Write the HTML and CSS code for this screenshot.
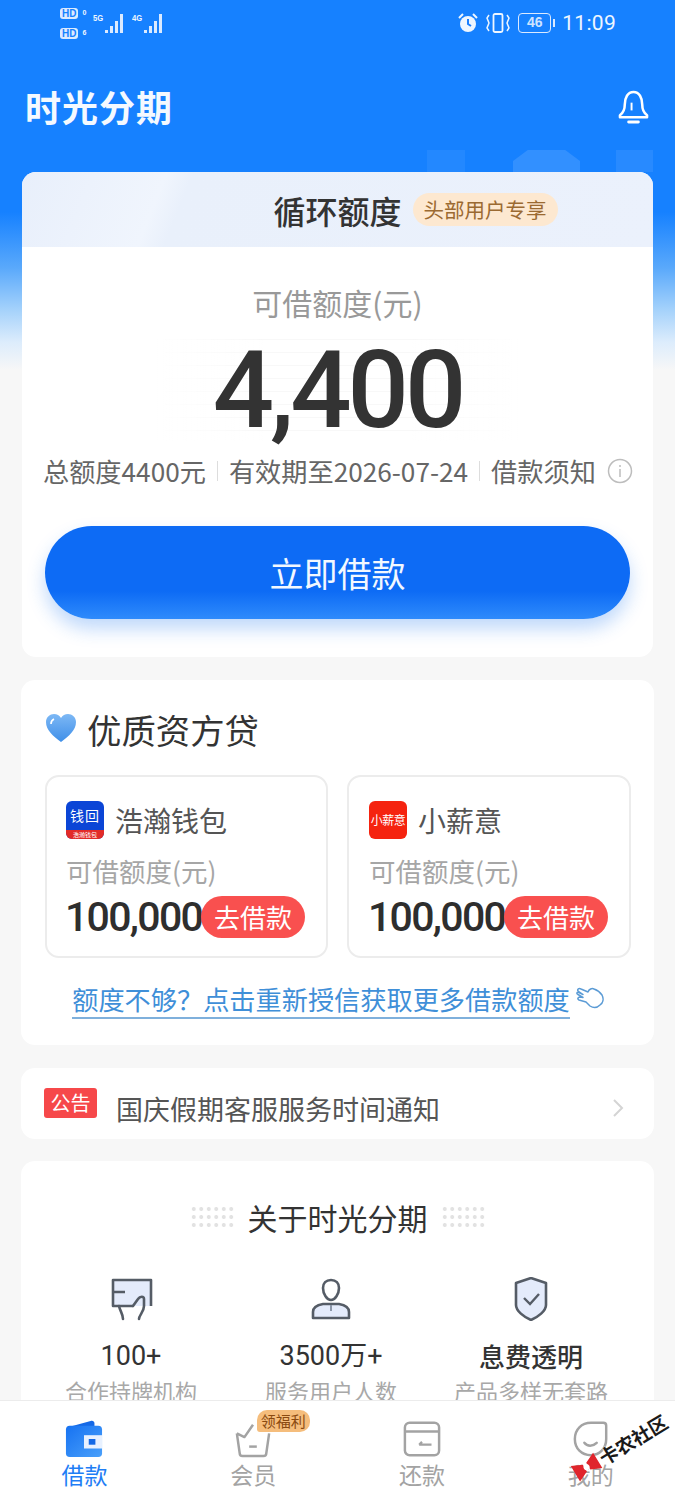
FILE: index.html
```html
<!DOCTYPE html>
<html lang="zh-CN">
<head>
<meta charset="utf-8">
<title>时光分期</title>
<link rel="stylesheet" href="styles.css">
</head>
<body>
<div class="page">
  <div class="scroll">
    <div class="status">
      <div class="status-left">
        <div class="hd-col">
          <div class="hd-row"><span class="hd">HD</span><span class="hd-n">0</span></div>
          <div class="hd-row"><span class="hd">HD</span><span class="hd-n">6</span></div>
        </div>
        <div class="signal"><span class="net">5G</span>
          <svg class="bars" viewBox="0 0 20 20"><path d="M0 20v-3h3v3zM5 20v-7h3v7zM10 20v-12h3v12zM15 20V1h3v19z" fill="#dbeaff"/></svg>
        </div>
        <div class="signal"><span class="net">4G</span>
          <svg class="bars" viewBox="0 0 20 20"><path d="M0 20v-3h3v3zM5 20v-7h3v7zM10 20v-12h3v12zM15 20V1h3v19z" fill="#dbeaff"/></svg>
        </div>
      </div>
      <div class="status-right">
        <svg class="st-alarm" viewBox="0 0 20 20"><circle cx="10" cy="11" r="8" fill="#eef6ff"/><path d="M10 6v5l3 2" stroke="#1a7fff" stroke-width="2" fill="none"/><path d="M1 5l4-4M19 5l-4-4" stroke="#eef6ff" stroke-width="2"/></svg>
        <svg class="st-vib" viewBox="0 0 26 20"><rect x="8.500" y="1" width="9" height="18" rx="1.500" fill="none" stroke="#eef6ff" stroke-width="1.800"/><path d="M4 2l-2 3 2 5-2 5 2 3M22 2l2 3-2 5 2 5-2 3" fill="none" stroke="#eef6ff" stroke-width="1.500"/></svg>
        <span class="batt">46</span><span class="batt-tip"></span>
        <span class="clock">11:09</span>
      </div>
    </div>

    <header class="topbar">
      <h1 class="brand">时光分期</h1>
      <svg class="bell" viewBox="0 0 32 38"><path d="M16 3c-6 0-9 6-9 13 0 6-2 9-5 11v2h28v-2c-3-2-5-5-5-11 0-7-3-13-9-13z" fill="none" stroke="#fff" stroke-width="2.600" stroke-linejoin="round"/><path d="M14 14v8" stroke="#fff" stroke-width="2"/><path d="M11 34h10" stroke="#fff" stroke-width="3" stroke-linecap="round"/></svg>
    </header>

    <div class="deco">
      <span class="deco-a"></span><span class="deco-b"></span><span class="deco-c"></span>
    </div>

    <section class="card quota">
      <div class="quota-head">
        <span class="quota-title">循环额度</span>
        <span class="quota-tag">头部用户专享</span>
      </div>
      <div class="quota-label">可借额度(元)</div>
      <div class="quota-amount">4,400</div>
      <div class="quota-meta">
        <span>总额度4400元</span><i class="sep"></i>
        <span>有效期至2026-07-24</span><i class="sep"></i>
        <span>借款须知</span>
        <svg class="info" viewBox="0 0 26 26"><circle cx="13" cy="13" r="11.500" fill="none" stroke="#bdbdbd" stroke-width="1.500"/><path d="M13 11v8M13 7v2" stroke="#bdbdbd" stroke-width="1.500"/></svg>
      </div>
      <button class="cta">立即借款</button>
    </section>

    <section class="card lenders">
      <h2 class="lenders-title">
        <svg class="heart" viewBox="0 0 32 30"><defs><linearGradient id="hg" x1="0" y1="0" x2="0" y2="1"><stop offset="0" stop-color="#7db8f5"/><stop offset="1" stop-color="#3f8fe8"/></linearGradient></defs><path d="M16 29C8 23 1 17 1 9c0-5 4-8 8-8 3 0 5.500 1.500 7 4 1.500-2.500 4-4 7-4 4 0 8 3 8 8 0 8-7 14-15 20z" fill="url(#hg)"/><path d="M6 11c0-3 1-4 3-5" stroke="#fff" stroke-width="1.600" fill="none"/></svg>
        优质资方贷
      </h2>
      <div class="lender-grid">
        <div class="lender">
          <div class="lender-name">
            <span class="logo logo-blue"><span class="logo-main">钱回</span><span class="logo-foot">浩瀚钱包</span></span>
            浩瀚钱包
          </div>
          <div class="lender-label">可借额度(元)</div>
          <div class="lender-row"><span class="lender-num">100,000</span><span class="go">去借款</span></div>
        </div>
        <div class="lender">
          <div class="lender-name">
            <span class="logo logo-red">小薪意</span>
            小薪意
          </div>
          <div class="lender-label">可借额度(元)</div>
          <div class="lender-row"><span class="lender-num">100,000</span><span class="go">去借款</span></div>
        </div>
      </div>
      <div class="more">
        <span class="more-link">额度不够？点击重新授信获取更多借款额度</span>
        <svg class="hand" viewBox="0 0 28 24"><path d="M2 5c-1-2 1-3 3-2l7 3c1-3 4-4 6-3 3 1 6 3 8 6 2 4 1 8-2 10-3 3-7 3-10 1l-4-4-7-2c-2-1-1-3 1-3l3 .500-5-3c-2-1-1-3 1-2l4 2z" fill="none" stroke="#5b9bd5" stroke-width="1.500" stroke-linejoin="round"/></svg>
      </div>
    </section>

    <section class="card notice">
      <span class="notice-tag">公告</span>
      <span class="notice-text">国庆假期客服服务时间通知</span>
      <svg class="chev" viewBox="0 0 12 20"><path d="M2 2l8 8-8 8" fill="none" stroke="#d4d4d4" stroke-width="2"/></svg>
    </section>

    <section class="card about">
      <div class="about-head">
        <span class="dots"></span>
        <h2 class="about-title">关于时光分期</h2>
        <span class="dots"></span>
      </div>
      <div class="about-grid">
        <div class="stat">
          <svg class="stat-icon" viewBox="0 0 44 44"><path d="M5 3h36v26H5z" fill="#e4ebfb"/><path d="M24 29H4V3h38v26M4 15h12" fill="none" stroke="#555c66" stroke-width="2.600" stroke-linejoin="round"/><path d="M10 29c1 5 4 8 4 13" fill="none" stroke="#555c66" stroke-width="2.600" stroke-linecap="round"/><path d="M30 42c0-4 5-7 5-13v-7c0-3-4-3-6 0l-5 7" fill="none" stroke="#555c66" stroke-width="2.600" stroke-linecap="round"/></svg>
          <div class="stat-num">100+</div>
          <div class="stat-text">合作持牌机构</div>
        </div>
        <div class="stat">
          <svg class="stat-icon" viewBox="0 0 44 44"><path d="M4 41v-6c0-5 4-7 10-8h16c6 1 10 3 10 8v6z" fill="#e4ebfb" stroke="#555c66" stroke-width="2.600" stroke-linejoin="round"/><path d="M22 3c-5 0-8 3-8 8 0 6 4 12 8 12s8-6 8-12c0-5-3-8-8-8z" fill="#fff" stroke="#555c66" stroke-width="2.600"/><path d="M22 28v6" stroke="#8b96a8" stroke-width="2"/></svg>
          <div class="stat-num">3500万+</div>
          <div class="stat-text">服务用户人数</div>
        </div>
        <div class="stat">
          <svg class="stat-icon" viewBox="0 0 44 44"><path d="M22 1l15 5v22c0 6-8 12-15 15-7-3-15-9-15-15V6z" fill="#e4ebfb" stroke="#555c66" stroke-width="2.600" stroke-linejoin="round"/><path d="M15 21l6 6 9-10" fill="none" stroke="#555c66" stroke-width="2.400"/></svg>
          <div class="stat-num stat-bold">息费透明</div>
          <div class="stat-text">产品多样无套路</div>
        </div>
      </div>
    </section>
  </div>

  <nav class="tabbar">
    <div class="tab tab-on">
      <svg class="tab-icon" viewBox="0 0 40 40"><defs><linearGradient id="wg" x1="0" y1="0" x2="1" y2="1"><stop offset="0" stop-color="#1672f2"/><stop offset="1" stop-color="#4aa0fa"/></linearGradient></defs><path d="M2 8L27 1c2-.500 4 0 4 3v5z" fill="#1569e6"/><rect x="1" y="6" width="38" height="33" rx="4" fill="url(#wg)"/><rect x="20" y="16" width="19" height="14" fill="#e8f1ff"/><rect x="25" y="20" width="7" height="6" fill="#1569e6"/></svg>
      <span>借款</span>
    </div>
    <div class="tab">
      <svg class="tab-icon" viewBox="0 0 40 40"><path d="M3 14l3 21c0 2 1 3 3 3h22c2 0 3-1 3-3l3-21M3 14l8 4 9-13" fill="none" stroke="#a3a3a3" stroke-width="2.600" stroke-linejoin="round"/><path d="M16 28h8" stroke="#a3a3a3" stroke-width="2.600"/></svg>
      <span>会员</span>
      <em class="tab-badge">领福利</em>
    </div>
    <div class="tab">
      <svg class="tab-icon" viewBox="0 0 40 40"><rect x="2" y="3" width="36" height="34" rx="5" fill="none" stroke="#a3a3a3" stroke-width="2.600"/><path d="M2 12h36" stroke="#a3a3a3" stroke-width="2.600"/><path d="M17 26h13M17 26l3-3" stroke="#a3a3a3" stroke-width="2.400" fill="none"/></svg>
      <span>还款</span>
    </div>
    <div class="tab">
      <svg class="tab-icon" viewBox="0 0 40 40"><path d="M20 3h13c2 0 3 1 3 3v14c0 10-7 17-16 17C10 37 3 30 3 20 3 10 10 3 20 3z" fill="none" stroke="#a3a3a3" stroke-width="2.600"/><path d="M13 24c3 4 9 4 13 0" fill="none" stroke="#a3a3a3" stroke-width="2.600" stroke-linecap="round"/></svg>
      <span>我的</span>
    </div>
  </nav>

  <div class="watermark">
    <svg class="wm-logo" viewBox="0 0 28 26"><path d="M1 4l11 5v8L1 22zM27 4l-11 5v8l11 5z" fill="#e0252c"/><circle cx="14" cy="13" r="3" fill="#fff"/></svg>
    <span>卡农社区</span>
  </div>
</div>
</body>
</html>
```
FILE: styles.css
```css
* { box-sizing: border-box; }
html, body { margin: 0; padding: 0; }
body { width: 675px; height: 1500px; overflow: hidden; font-family: "Noto Sans CJK SC", "Noto Sans", sans-serif; color: #333; }
h1, h2 { margin: 0; font-weight: 400; }

.page { position: relative; width: 675px; height: 1500px; display: flex; flex-direction: column; overflow: hidden; background: #f7f7f7; }
.scroll { flex: 1; min-height: 0; overflow: hidden; padding: 0 21px; background: linear-gradient(180deg, #1681ff 0, #1681ff 212px, #5aa9fb 268px, #a5d2fb 310px, #dcecfc 342px, #f7f7f7 370px); }

.status { display: flex; justify-content: space-between; height: 46px; margin: 0 -21px; padding: 7px 59px 0 60px; color: #eef6ff; }
.status-left { display: flex; gap: 7px; }
.hd-col { display: flex; flex-direction: column; gap: 8px; }
.hd-row { display: flex; align-items: center; gap: 4px; height: 12px; }
.hd { font: 700 10px/11px "Liberation Sans", sans-serif; border-radius: 3px; padding: 0 2px; background: #dbeaff; color: #1681ff; }
.hd-n { font: 700 7px/10px "Liberation Sans", sans-serif; }
.signal { display: flex; align-items: flex-start; height: 26px; padding-top: 6px; }
.net { font: 700 9px/10px "Liberation Sans", sans-serif; width: 12px; transform: scaleX(.85); transform-origin: left; }
.bars { width: 20px; height: 20px; }
.status-right { display: flex; align-items: center; height: 32px; }
.st-alarm { width: 20px; height: 20px; margin-right: 7px; }
.st-vib { width: 26px; height: 20px; margin-right: 7px; }
.batt { width: 33px; height: 20px; border: 1.500px solid #dbeaff; border-radius: 4px; font: 700 14px/17px "Liberation Sans", sans-serif; text-align: center; color: #cfe4ff; }
.batt-tip { width: 2px; height: 8px; background: #dbeaff; margin: 0 7px 0 2px; }
.clock { font: 400 21px/32px Roboto, sans-serif; letter-spacing: .3px; }

.topbar { display: flex; justify-content: space-between; align-items: center; height: 124px; padding: 0 2px 2px 4px; }
.brand { margin-top: -2px; font-size: 36px; line-height: 42px; font-weight: 700; color: #f4f9ff; letter-spacing: 1px; }
.bell { width: 31px; height: 37px; margin-right: 3px; }

.deco { display: flex; height: 22px; margin: -20px 1px 0 406px; }
.deco-a { width: 38px; background: rgba(255,255,255,.06); }
.deco-b { width: 67px; margin-left: 48px; background: rgba(255,255,255,.12); clip-path: polygon(22% 0, 78% 0, 100% 50%, 100% 100%, 0 100%, 0 50%); }
.deco-c { width: 37px; margin-left: 36px; background: rgba(255,255,255,.08); }

.card { background: #fff; border-radius: 14px; }
.quota { position: relative; height: 485px; margin: 0 1px 23px 1px; display: flex; flex-direction: column; align-items: center; overflow: hidden; }
.quota-head { align-self: stretch; height: 75px; display: flex; justify-content: center; align-items: center; gap: 11px; padding-left: 156px; background: linear-gradient(112deg, #e8effb 0, #f0f5fd 22%, #e9f0fb 26%, #ebf1fc 100%); }
.quota-title { flex: none; font-size: 32px; line-height: 44px; color: #333; font-weight: 500; }
.quota-tag { flex: none; font-size: 20.500px; line-height: 33px; height: 33px; padding: 0 11px; border-radius: 17px; background: #fde8d0; color: #9b6a32; }
.quota-label { margin-top: 34px; font-size: 30px; line-height: 42px; color: #999; }
.quota-amount { margin-top: 16px; padding: 0 56px; font-family: Roboto, sans-serif; font-weight: 500; font-size: 108px; line-height: 102px; letter-spacing: -4px; color: #333; background: linear-gradient(90deg, #fff, rgba(255,255,255,0) 30%, rgba(255,255,255,0) 70%, #fff), repeating-linear-gradient(180deg, #f8f8f8 0, #f8f8f8 1px, transparent 1px, transparent 13px); }
.quota-meta { align-self: stretch; display: flex; align-items: center; margin-top: 12px; padding: 0 21px; font-size: 26.200px; line-height: 36px; color: #666; white-space: nowrap; }
.sep { flex: none; width: 1px; height: 20px; background: #ddd; margin: 0 11px; }
.info { flex: none; width: 26px; height: 26px; margin-left: 11px; }
.cta { flex: none; width: 585px; height: 93px; margin-top: 37px; border: 0; border-radius: 47px; font: 400 34px/44px "Noto Sans CJK SC", sans-serif; color: #f2f8ff; background: linear-gradient(180deg, #0d6bf5 0, #0d6bf5 70%, #2f8bfb 100%); box-shadow: 0 10px 18px rgba(30,120,240,.28); }

.lenders { height: 365px; padding: 25px 23px 0 24px; }
.lenders-title { display: flex; align-items: center; gap: 10px; height: 48px; font-size: 34.400px; color: #333; }
.heart { width: 32px; height: 30px; margin-top: -2px; }
.lender-grid { display: grid; grid-template-columns: 283px 284px; gap: 19px; margin-top: 22px; }
.lender { height: 183px; border: 2px solid #ececec; border-radius: 14px; padding: 22px 19px 0; }
.lender + .lender { padding-left: 20px; }
.lender-name { display: flex; align-items: center; gap: 11px; height: 42px; font-size: 28px; color: #555; }
.logo { width: 38px; height: 38px; border-radius: 6px; flex: none; display: flex; flex-direction: column; align-items: center; justify-content: center; overflow: hidden; color: #fff; }
.logo-blue { background: #0b45d6; }
.logo-main { flex: 1; font-size: 14px; line-height: 29px; letter-spacing: 1px; }
.logo-foot { align-self: stretch; height: 9px; background: #e22b28; font-size: 6px; line-height: 9px; text-align: center; }
.logo-red { background: #f5230f; font-size: 12px; line-height: 38px; letter-spacing: -.5px; flex-direction: row; white-space: nowrap; }
.lender-label { margin-top: 12px; font-size: 26.500px; line-height: 36px; color: #a6a6a6; white-space: nowrap; }
.lender-row { display: flex; align-items: center; height: 44px; margin-top: 6px; }
.lender-num { margin-left: -1px; font-family: Roboto, sans-serif; font-size: 41px; font-weight: 500; color: #2e2e2e; letter-spacing: -1.700px; line-height: 44px; }
.go { flex: none; width: 104px; height: 42px; margin-left: -1px; border-radius: 21px; background: #f9504f; color: #fff; font-size: 26px; line-height: 42px; text-align: center; }
.more { display: flex; align-items: center; justify-content: center; gap: 6px; margin-top: 23px; }
.more-link { font-size: 26.200px; line-height: 36px; color: #3f8fd8; border-bottom: 2px solid #7fb0dc; white-space: nowrap; }
.hand { flex: none; width: 28px; height: 24px; margin-bottom: 4px; }

.notice { display: flex; align-items: center; height: 71px; margin-top: 23px; padding: 0 30px 0 23px; }
.notice-tag { align-self: flex-start; margin-top: 20px; width: 53px; height: 30px; border-radius: 3px; background: #f6484a; color: #fff; font-size: 20px; line-height: 30px; text-align: center; }
.notice-text { flex: 1; margin-left: 19px; font-size: 27px; line-height: 40px; color: #555; margin-top: 10px; }
.chev { width: 12px; height: 20px; margin-top: 8px; }

.about { height: 300px; margin-top: 22px; padding-top: 34px; }
.about-head { display: flex; align-items: center; justify-content: center; gap: 13px; height: 44px; }
.about-title { font-size: 30px; line-height: 44px; color: #333; }
.dots { width: 45px; height: 24px; background-image: radial-gradient(circle, #e2e2e2 1.800px, transparent 2.200px); background-size: 7.500px 8px; }
.about-grid { display: grid; grid-template-columns: repeat(3, 200px); margin: 38px 0 0 10px; }
.stat { display: flex; flex-direction: column; align-items: center; }
.stat-icon { width: 44px; height: 44px; }
.stat-num { margin-top: 17px; font-family: Roboto, "Noto Sans CJK SC", sans-serif; font-size: 27px; line-height: 36px; color: #333; }
.stat-bold { font-family: "Noto Sans CJK SC", sans-serif; font-size: 26px; font-weight: 500; }
.stat-text { margin-top: 0; font-size: 22px; line-height: 32px; color: #a8a8a8; white-space: nowrap; }

.tabbar { height: 100px; flex: none; display: grid; grid-template-columns: repeat(4, 1fr); background: #fff; border-top: 1px solid #ececec; }
.tab { position: relative; display: flex; flex-direction: column; align-items: center; padding-top: 19px; font-size: 23px; line-height: 30px; color: #a3a3a3; }
.tab-on { color: #1f7ef5; }
.tab-icon { width: 38px; height: 38px; margin-bottom: 1px; }
.tab-badge { position: absolute; left: 88px; top: 9px; width: 53px; height: 22px; border-radius: 10px 10px 10px 3px; background: #f5bd7c; color: #8a4a10; font-style: normal; font-size: 15px; line-height: 22px; text-align: center; }

.watermark { position: absolute; left: 567px; top: 1434px; display: flex; align-items: center; gap: 2px; transform: rotate(-31deg); font-size: 19px; line-height: 26px; font-weight: 700; color: #1a1a1a; text-shadow: 0 0 2px #fff, 0 0 2px #fff; white-space: nowrap; }
.wm-logo { flex: none; width: 28px; height: 26px; }
```
